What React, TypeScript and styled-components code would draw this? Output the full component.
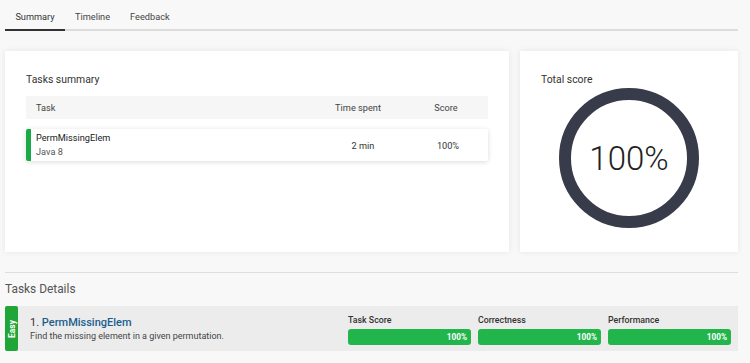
import styled, { createGlobalStyle } from "styled-components";

const GlobalStyle = createGlobalStyle`
  body {
    margin: 0;
    background: #f8f8f8;
    font-family: Roboto, "Liberation Sans", sans-serif;
    color: #333;
  }
`;

const Page = styled.div`
  width: 750px;
  padding: 0 12px 0 5px;
  box-sizing: border-box;
`;

const Tabs = styled.div`
  display: flex;
  height: 29px;
  border-bottom: 2px solid #dcdcdc;
`;

const Tab = styled.div<{ $active?: boolean }>`
  padding: 11px 10px 0;
  font-size: 9.2px;
  color: ${(p) => (p.$active ? "#333" : "#444")};
  border-bottom: 2px solid ${(p) => (p.$active ? "#333" : "transparent")};
  margin-bottom: -2px;
  box-sizing: border-box;
  width: ${(p) => (p.$active ? "60px" : "auto")};
  text-align: center;
`;

const CardsRow = styled.div`
  display: flex;
  gap: 11px;
  margin-top: 20px;
`;

const Card = styled.div<{ $width: number }>`
  width: ${(p) => p.$width}px;
  height: 201px;
  background: #fff;
  box-shadow: 0 0 6px rgba(0, 0, 0, 0.08);
  padding: 22px 21px;
  box-sizing: border-box;
`;

const CardTitle = styled.div`
  font-size: 10.4px;
  color: #333;
  line-height: 14px;
`;

const Grid = styled.div`
  display: grid;
  grid-template-columns: 1fr 100px 80px;
  align-items: center;
  font-size: 9.2px;
`;

const HeadRow = styled(Grid)`
  margin-top: 9px;
  height: 23px;
  background: #f6f6f6;
  color: #444;
`;

const TaskRow = styled(Grid)`
  margin-top: 10px;
  height: 32px;
  background: #fff;
  border-left: 5px solid #1aaa48;
  box-shadow: 0 1px 5px rgba(0, 0, 0, 0.15);
  border-radius: 2px;
`;

const Cell = styled.div<{ $center?: boolean; $left?: number; $right?: number }>`
  text-align: ${(p) => (p.$center ? "center" : "left")};
  padding-left: ${(p) => p.$left ?? 0}px;
  padding-right: ${(p) => p.$right ?? 0}px;
`;

const TaskName = styled.div`
  color: #222;
  line-height: 14px;
`;

const TaskLang = styled.div`
  color: #555;
  line-height: 14px;
`;

const RingWrap = styled.div`
  display: flex;
  justify-content: center;
  margin-top: 1px;
`;

const Ring = styled.div`
  width: 140px;
  height: 140px;
  border: 12px solid #383c4a;
  border-radius: 50%;
  box-sizing: border-box;
  display: flex;
  align-items: center;
  justify-content: center;
  font-size: 33px;
  font-weight: 300;
  color: #222;
`;

const Divider = styled.div`
  margin-top: 20px;
  height: 1px;
  background: #dedede;
`;

const SectionTitle = styled.div`
  margin-top: 9px;
  font-size: 11.9px;
  color: #555;
  line-height: 15px;
`;

const DetailRow = styled.div`
  margin-top: 9px;
  height: 45px;
  background: #ececec;
  display: flex;
  align-items: stretch;
  padding-right: 7px;
`;

const Badge = styled.div`
  width: 13px;
  background: #1fa637;
  border-radius: 2px;
  display: flex;
  align-items: center;
  justify-content: center;
`;

const BadgeText = styled.span`
  transform: rotate(-90deg);
  color: #fff;
  font-size: 8.5px;
  font-weight: 700;
`;

const DetailInfo = styled.div`
  flex: 1;
  padding: 9px 0 0 12px;
`;

const DetailTitle = styled.div`
  font-size: 11px;
  line-height: 15px;
  color: #333;
  span {
    color: #1b5e8e;
    font-weight: 500;
  }
`;

const DetailDesc = styled.div`
  font-size: 9px;
  line-height: 12px;
  color: #444;
`;

const Metrics = styled.div`
  display: flex;
  gap: 7px;
  padding-top: 8px;
`;

const Metric = styled.div`
  width: 123px;
`;

const MetricLabel = styled.div`
  font-size: 8.8px;
  font-weight: 500;
  color: #333;
  line-height: 12px;
  height: 15px;
`;

const Bar = styled.div`
  height: 16px;
  border-radius: 3px;
  background: #22b54b;
  color: #fff;
  font-size: 8.2px;
  font-weight: 700;
  display: flex;
  align-items: center;
  justify-content: flex-end;
  padding-right: 4px;
  box-sizing: border-box;
`;

const metrics = ["Task Score", "Correctness", "Performance"];

export default function App() {
  return (
    <Page>
      <GlobalStyle />
      <Tabs>
        <Tab $active>Summary</Tab>
        <Tab>Timeline</Tab>
        <Tab>Feedback</Tab>
      </Tabs>
      <CardsRow>
        <Card $width={504}>
          <CardTitle>Tasks summary</CardTitle>
          <HeadRow>
            <Cell $left={10}>Task</Cell>
            <Cell $center>Time spent</Cell>
            <Cell $center $right={4}>Score</Cell>
          </HeadRow>
          <TaskRow>
            <Cell $left={5}>
              <TaskName>PermMissingElem</TaskName>
              <TaskLang>Java 8</TaskLang>
            </Cell>
            <Cell $center $left={10}>2 min</Cell>
            <Cell $center>100%</Cell>
          </TaskRow>
        </Card>
        <Card $width={218}>
          <CardTitle>Total score</CardTitle>
          <RingWrap>
            <Ring>100%</Ring>
          </RingWrap>
        </Card>
      </CardsRow>
      <Divider />
      <SectionTitle>Tasks Details</SectionTitle>
      <DetailRow>
        <Badge>
          <BadgeText>Easy</BadgeText>
        </Badge>
        <DetailInfo>
          <DetailTitle>
            1. <span>PermMissingElem</span>
          </DetailTitle>
          <DetailDesc>Find the missing element in a given permutation.</DetailDesc>
        </DetailInfo>
        <Metrics>
          {metrics.map((m) => (
            <Metric key={m}>
              <MetricLabel>{m}</MetricLabel>
              <Bar>100%</Bar>
            </Metric>
          ))}
        </Metrics>
      </DetailRow>
    </Page>
  );
}
